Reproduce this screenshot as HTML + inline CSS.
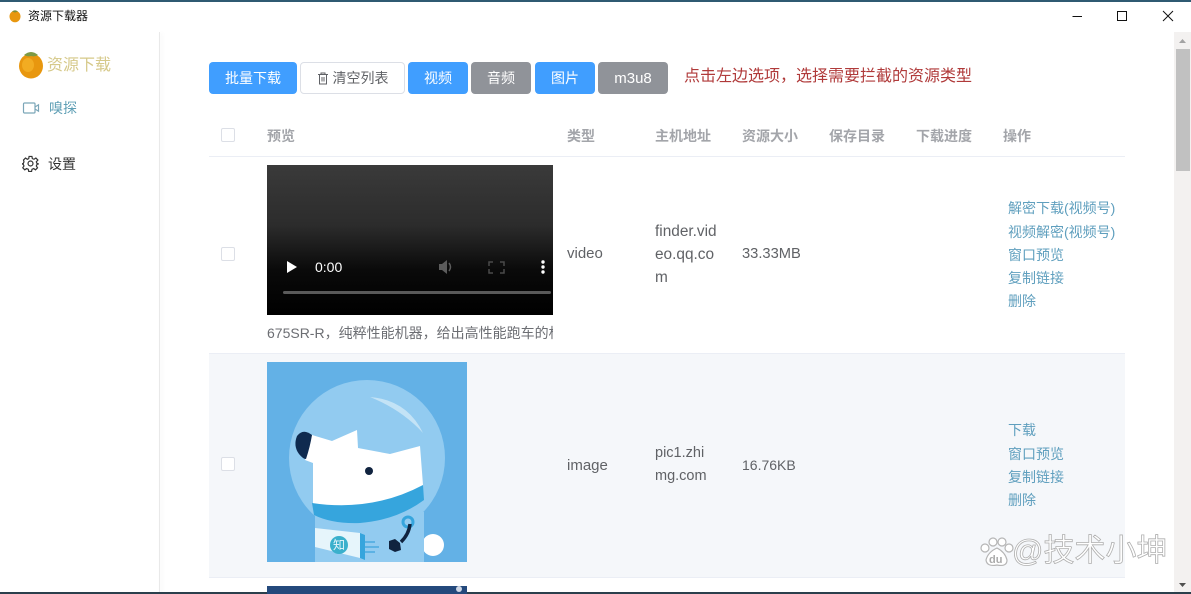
<!DOCTYPE html>
<html><head><meta charset="utf-8">
<style>
html,body{margin:0;padding:0;width:1191px;height:594px;overflow:hidden;background:#fff}
body{position:relative;font-family:"Liberation Sans","Noto Sans CJK SC",sans-serif;color:#606266;font-size:14px}
.a{position:absolute;white-space:nowrap}
.btn{position:absolute;top:62px;height:32px;line-height:32px;border-radius:4px;text-align:center;color:#fff;font-size:14px;background:#409eff}
.gray{background:#909399}
.h{position:absolute;top:127px;line-height:18px;font-size:14px;font-weight:bold;color:#a3a5aa;white-space:nowrap}
.cb{position:absolute;left:221px;width:12px;height:12px;border:1px solid #dcdfe6;border-radius:2px;background:#fff}
.t{position:absolute;line-height:23px;white-space:nowrap;color:#606266;font-size:15px}
.l{position:absolute;left:1008px;line-height:18px;white-space:nowrap;color:#5f9fbe;font-size:14px}
</style></head><body>
<div class="a" style="left:0;top:0;width:1191px;height:2px;background:#2f5a72"></div>

<!-- title bar -->
<svg class="a" style="left:8px;top:8px" width="14" height="15" viewBox="0 0 14 15"><ellipse cx="7" cy="8.500" rx="5.500" ry="5.800" fill="#e8970f"/><path d="M4 3.500Q7 1 10 3.500L7 4.500Z" fill="#7d8f3a"/></svg>
<div class="a" style="left:28px;top:8px;font-size:12px;line-height:17px;color:#111">资源下载器</div>
<svg class="a" style="left:1070px;top:8px" width="112" height="16" viewBox="0 0 112 16" fill="none" stroke="#111" stroke-width="1"><path d="M2.500 8.500H12"/><rect x="47.500" y="3.500" width="9" height="9"/><path d="M93 3L103 13M103 3L93 13"/></svg>

<!-- sidebar -->
<div class="a" style="left:159px;top:32px;width:1px;height:562px;background:#e9e9e9;box-shadow:2px 0 4px #eeeeee"></div>
<svg class="a" style="left:18px;top:50px" width="26" height="29" viewBox="0 0 26 29"><ellipse cx="13" cy="16" rx="12" ry="12.500" fill="#e8970f"/><ellipse cx="10" cy="15" rx="6" ry="7" fill="#f2ac22"/><path d="M6 5Q13 -1 20 5Q17 7 13 6Q9 7 6 5Z" fill="#7d9a45"/></svg>
<div class="a" style="left:47px;top:55px;font-size:16px;line-height:21px;color:#d6c98a">资源下载</div>
<svg class="a" style="left:22px;top:101px" width="18" height="14" viewBox="0 0 18 14" fill="none" stroke="#7ba6b8" stroke-width="1.200"><rect x="1.500" y="2" width="11.500" height="10" rx="1"/><path d="M13 6L16.500 3.800V10.200L13 8"/></svg>
<div class="a" style="left:49px;top:99px;font-size:14px;line-height:19px;color:#5f9fb5">嗅探</div>
<svg class="a" style="left:22px;top:155px" width="17" height="17" viewBox="0 0 24 24" fill="none" stroke="#333" stroke-width="1.700"><circle cx="12" cy="12" r="3.500"/><path d="M10 2h4l.6 3 2.400 1 2.600-1.700 2.800 2.800L20.200 9.700l1 2.300 2 .6v0l-2 .6-1 2.300 1.700 2.600-2.800 2.800-2.600-1.700-2.400 1-.6 3h-4l-.6-3-2.400-1-2.600 1.700-2.800-2.800 1.700-2.600-1-2.300-2-.6v0l2-.6 1-2.300L2.100 7.100 4.900 4.300 7.500 6l2-1z"/></svg>
<div class="a" style="left:48px;top:155px;font-size:14px;line-height:19px;color:#333">设置</div>

<!-- toolbar -->
<div class="btn" style="left:209px;width:88px">批量下载</div>
<div class="btn" style="left:300px;width:103px;height:30px;line-height:30px;background:#fff;border:1px solid #dcdfe6;color:#606266"><svg width="12" height="13" viewBox="0 0 12 13" fill="none" stroke="#606266" style="vertical-align:-2px;margin-right:4px"><path d="M1 2.500H11M4 2.500V1H8V2.500M2.500 2.500V12H9.500V2.500M5 5V9.500M7 5V9.500"/></svg>清空列表</div>
<div class="btn" style="left:408px;width:60px">视频</div>
<div class="btn gray" style="left:471px;width:60px">音频</div>
<div class="btn" style="left:535px;width:60px">图片</div>
<div class="btn gray" style="left:598px;width:70px;font-size:15px;line-height:33px">m3u8</div>
<div class="a" style="left:684px;top:67px;font-size:16px;line-height:20px;color:#b03a3a">点击左边选项，选择需要拦截的资源类型</div>

<!-- table header -->
<div class="cb" style="top:128px"></div>
<div class="h" style="left:267px">预览</div>
<div class="h" style="left:567px">类型</div>
<div class="h" style="left:655px">主机地址</div>
<div class="h" style="left:742px">资源大小</div>
<div class="h" style="left:829px">保存目录</div>
<div class="h" style="left:916px">下载进度</div>
<div class="h" style="left:1003px">操作</div>
<div class="a" style="left:209px;top:156px;width:916px;height:1px;background:#ebeef5"></div>

<!-- row 1 -->
<div class="cb" style="top:247px"></div>
<div class="a" style="left:267px;top:165px;width:286px;height:150px;background:linear-gradient(#3a3a3a 0%,#2c2c2c 40%,#0a0a0a 70%,#000 100%)"></div>
<svg class="a" style="left:267px;top:165px" width="286" height="150" viewBox="0 0 286 150"><path d="M20 96L30 102L20 108Z" fill="#fff"/><path d="M172 99H175L180 95V109L175 105H172Z" fill="#5c5c5c"/><path d="M182 98Q185 102 182 106" stroke="#5c5c5c" fill="none" stroke-width="1.500"/><path d="M222 101V97H226M233 97H237V101M237 104V108H233M226 108H222V104" stroke="#4a4a4a" fill="none" stroke-width="1.500"/><circle cx="276" cy="97" r="1.700" fill="#fff"/><circle cx="276" cy="102" r="1.700" fill="#fff"/><circle cx="276" cy="107" r="1.700" fill="#fff"/><rect x="16" y="126" width="268" height="3" rx="1.500" fill="#5a5a5a"/><text x="48" y="107" font-family="Liberation Sans" font-size="14" fill="#fff">0:00</text></svg>
<div class="a" style="left:267px;top:324px;width:286px;overflow:hidden;line-height:19px;font-size:14px;color:#6c6e73">675SR-R，纯粹性能机器，给出高性能跑车的标准</div>
<div class="t" style="left:567px;top:242px">video</div>
<div class="t" style="left:655px;top:220px;font-size:15.400px">finder.vid<br>eo.qq.co<br>m</div>
<div class="t" style="left:742px;top:243px;font-size:14.700px">33.33MB</div>
<div class="l" style="top:199px">解密下载(视频号)</div>
<div class="l" style="top:223px">视频解密(视频号)</div>
<div class="l" style="top:246px">窗口预览</div>
<div class="l" style="top:269px">复制链接</div>
<div class="l" style="top:292px">删除</div>
<div class="a" style="left:209px;top:353px;width:916px;height:1px;background:#ebeef5"></div>

<!-- row 2 -->
<div class="a" style="left:209px;top:354px;width:916px;height:223px;background:#f5f7fa"></div>
<div class="a" style="left:209px;top:577px;width:916px;height:1px;background:#ebeef5"></div>
<div class="cb" style="top:457px"></div>
<svg class="a" style="left:267px;top:362px" width="200" height="200" viewBox="0 0 200 200">
<rect width="200" height="200" fill="#63b1e6"/>
<circle cx="100" cy="96" r="78" fill="#92cbf0"/>
<path d="M103 35Q140 38 156 71Q135 48 103 35Z" fill="#cfe8f8" opacity=".8"/>
<circle cx="166" cy="183" r="11" fill="#fff"/>
<path d="M48 150H157V200H48Z" fill="#92cbf0"/>
<path d="M45 73L65 79L90 68L91 86L123 92L153 84L156 123L156 135L93 150L46 145L46 101L38 98Z" fill="#fff"/>
<path d="M45 73Q36 66 30 74Q26 84 32 92Q36 97 39 97Q43 85 45 73Z" fill="#0f2a4f"/>
<circle cx="102" cy="109" r="4" fill="#10233f"/>
<path d="M45 141Q105 150 156 123L157 138Q130 158 93 161Q65 162 47 153Z" fill="#36a5dd"/>
<path d="M48 166L93 171V196L48 185Z" fill="#e6f5fb"/>
<path d="M93 171L98 173V198L93 196Z" fill="#36a5dd"/>
<circle cx="72" cy="183" r="9" fill="#3ab0cc"/>
<text x="66" y="187" font-family="Noto Sans CJK SC" font-size="12" fill="#e6f5fb">知</text>
<path d="M98 180H108M98 190H108M98 185H112" stroke="#4aaadf" stroke-width="1.500"/>
<circle cx="141" cy="160" r="5" fill="none" stroke="#36a5dd" stroke-width="3"/>
<path d="M143 162Q142 172 134 180" stroke="#10233f" stroke-width="3.500" fill="none"/>
<path d="M122 179L128 177L133 181L134 188L128 190L122 187Z" fill="#10233f"/>
</svg>
<div class="t" style="left:567px;top:454px">image</div>
<div class="t" style="left:655px;top:442px;font-size:14.500px">pic1.zhi<br>mg.com</div>
<div class="t" style="left:742px;top:454px;font-size:14px">16.76KB</div>
<div class="l" style="top:421px">下载</div>
<div class="l" style="top:445px">窗口预览</div>
<div class="l" style="top:468px">复制链接</div>
<div class="l" style="top:491px">删除</div>

<!-- row 3 -->
<div class="a" style="left:267px;top:586px;width:200px;height:8px;background:#24497c"></div>
<div class="a" style="left:456px;top:586px;width:6px;height:6px;border-radius:3px;background:#cfd8e6"></div>

<!-- scrollbar -->
<div class="a" style="left:1174px;top:32px;width:17px;height:562px;background:#f3f1f0"></div>
<div class="a" style="left:1176px;top:49px;width:14px;height:122px;background:#c1c1c1"></div>
<svg class="a" style="left:1174px;top:36px" width="17" height="10"><path d="M5 7L8.500 3L12 7Z" fill="#a3a3a3"/></svg>
<svg class="a" style="left:1174px;top:580px" width="17" height="10"><path d="M5 3L8.500 7L12 3Z" fill="#505050"/></svg>

<!-- bottom window border -->
<div class="a" style="left:0;top:592px;width:267px;height:2px;background:#2b3f4c"></div>
<div class="a" style="left:467px;top:592px;width:724px;height:2px;background:#2b3f4c"></div>

<!-- watermark -->
<svg class="a" style="left:978px;top:536px" width="36" height="32" viewBox="0 0 36 32"><g fill="#fff" stroke="#b5b5b5" stroke-width="1.200"><circle cx="7" cy="12" r="4"/><circle cx="15" cy="6" r="4"/><circle cx="24" cy="6" r="4"/><circle cx="31" cy="12" r="4"/><path d="M19 12Q27 16 29 24Q29 31 19 29Q9 31 8 24Q10 16 19 12Z"/></g><text x="11" y="27" font-family="Liberation Sans" font-size="11" font-weight="bold" fill="#aaa">du</text></svg>
<div class="a" style="left:1012px;top:531px;font-size:31px;line-height:40px;color:#fff;-webkit-text-stroke:.8px #b0b0b0">@技术小坤</div>
</body></html>
